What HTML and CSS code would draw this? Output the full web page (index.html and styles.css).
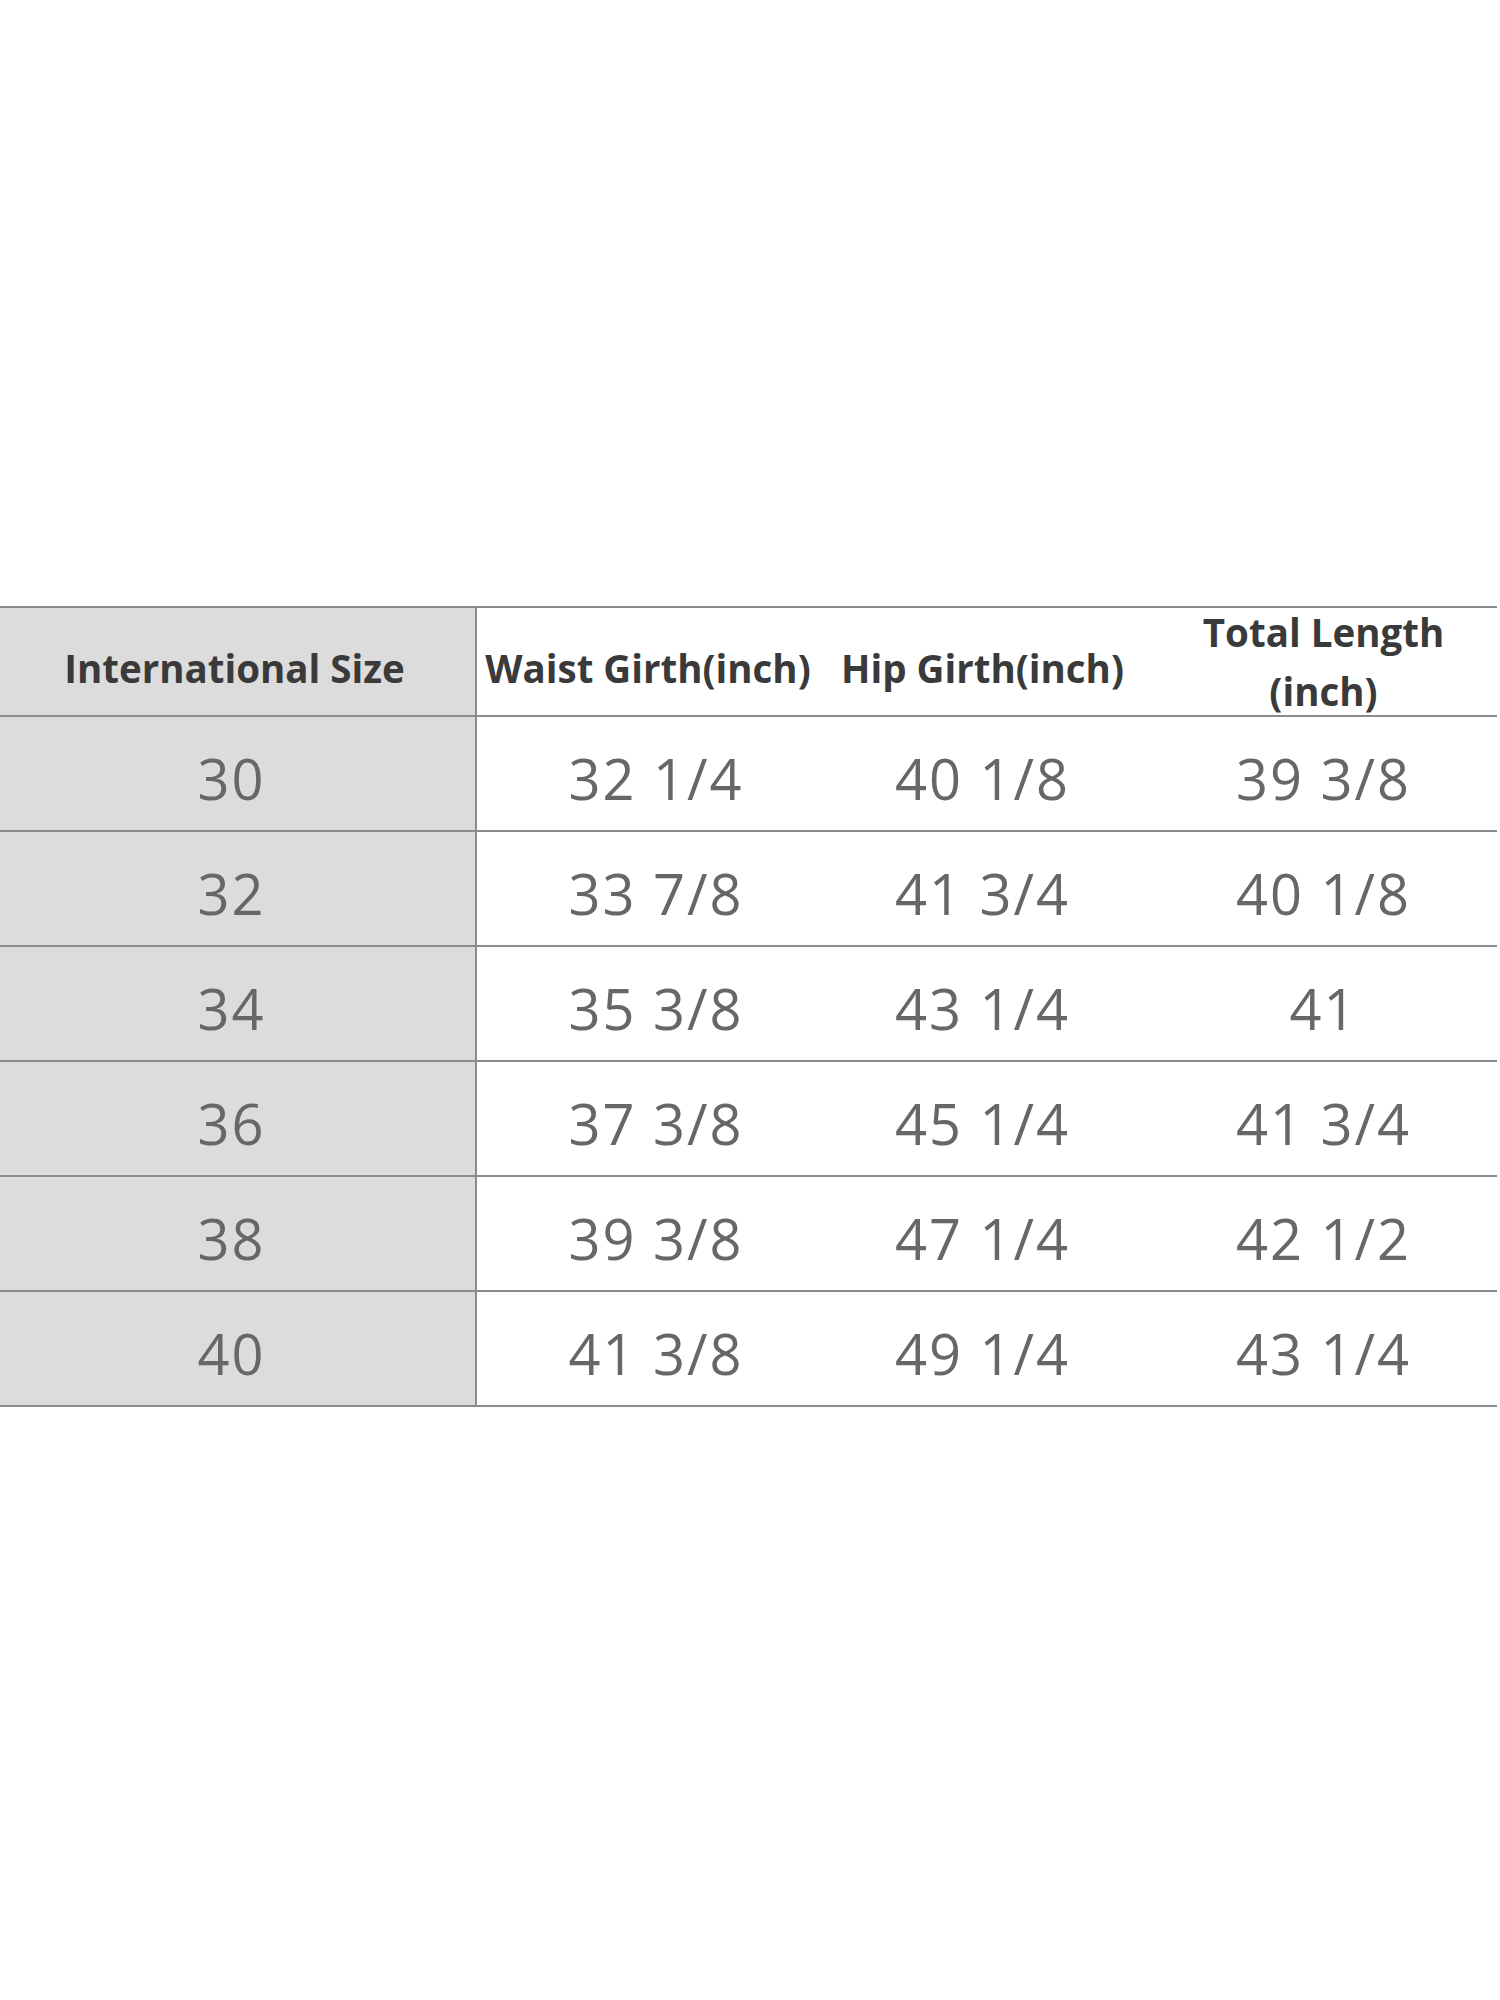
FILE: index.html
```html
<!DOCTYPE html>
<html lang="en">
<head>
<meta charset="utf-8">
<title>Size Chart</title>
<link rel="stylesheet" href="styles.css">
</head>
<body>
<div class="page">
  <div class="chart">
    <div class="row head">
      <div class="cell first">International Size</div>
      <div class="cell">Waist Girth(inch)</div>
      <div class="cell">Hip Girth(inch)</div>
      <div class="cell two">Total Length<br>(inch)</div>
    </div>
    <div class="row">
      <div class="cell first">30</div>
      <div class="cell">32 1/4</div>
      <div class="cell">40 1/8</div>
      <div class="cell">39 3/8</div>
    </div>
    <div class="row">
      <div class="cell first">32</div>
      <div class="cell">33 7/8</div>
      <div class="cell">41 3/4</div>
      <div class="cell">40 1/8</div>
    </div>
    <div class="row">
      <div class="cell first">34</div>
      <div class="cell">35 3/8</div>
      <div class="cell">43 1/4</div>
      <div class="cell">41</div>
    </div>
    <div class="row">
      <div class="cell first">36</div>
      <div class="cell">37 3/8</div>
      <div class="cell">45 1/4</div>
      <div class="cell">41 3/4</div>
    </div>
    <div class="row">
      <div class="cell first">38</div>
      <div class="cell">39 3/8</div>
      <div class="cell">47 1/4</div>
      <div class="cell">42 1/2</div>
    </div>
    <div class="row">
      <div class="cell first">40</div>
      <div class="cell">41 3/8</div>
      <div class="cell">49 1/4</div>
      <div class="cell">43 1/4</div>
    </div>
  </div>
</div>
</body>
</html>
```
FILE: styles.css
```css
html, body {
  margin: 0;
  padding: 0;
  background: #ffffff;
}
body {
  width: 1500px;
  height: 2000px;
  font-family: "Open Sans", "Noto Sans", sans-serif;
}
.page {
  padding-top: 606px;
}
.chart {
  width: 1497px;
  border-top: 2px solid #8c8c8c;
}
.row {
  display: grid;
  grid-template-columns: 477px 338px 335px 347px;
  grid-template-rows: 100%;
  height: 113px;
  border-bottom: 2px solid #8c8c8c;
  color: #676767;
  font-size: 56px;
  letter-spacing: 2px;
}
.row.head {
  height: 107px;
  color: #3a3a3a;
  font-size: 38.5px;
  font-weight: 700;
  letter-spacing: 0;
}
.cell {
  display: flex;
  align-items: center;
  justify-content: center;
  text-align: center;
  white-space: nowrap;
  padding-top: 8px;
  box-sizing: border-box;
  min-height: 0;
}
.row .cell:nth-child(2) {
  padding-left: 20px;
}
.head .cell {
  padding-top: 13px;
}
.head .cell:nth-child(2) {
  padding-left: 4px;
}
.head .cell.two {
  padding-top: 0;
  line-height: 59px;
}
.cell.first {
  background: #dcdcdc;
  border-right: 2px solid #8c8c8c;
  padding-right: 12px;
}
.head .cell.first {
  padding-right: 6px;
}
```
